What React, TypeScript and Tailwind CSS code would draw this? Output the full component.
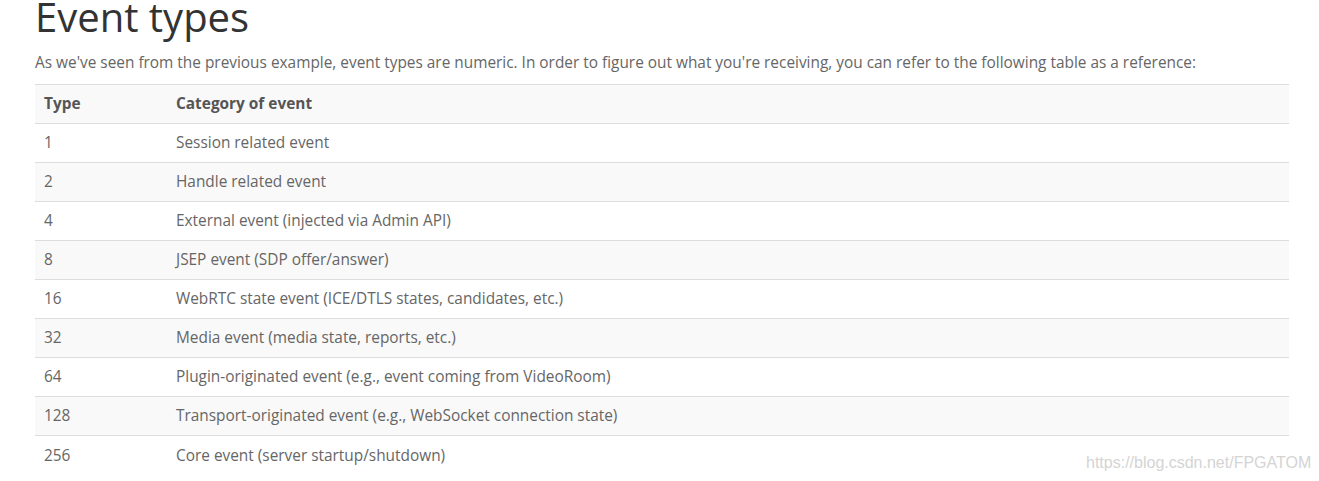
const rows = [
  ['1', 'Session related event'],
  ['2', 'Handle related event'],
  ['4', 'External event (injected via Admin API)'],
  ['8', 'JSEP event (SDP offer/answer)'],
  ['16', 'WebRTC state event (ICE/DTLS states, candidates, etc.)'],
  ['32', 'Media event (media state, reports, etc.)'],
  ['64', 'Plugin-originated event (e.g., event coming from VideoRoom)'],
  ['128', 'Transport-originated event (e.g., WebSocket connection state)'],
  ['256', 'Core event (server startup/shutdown)'],
];

export default function App() {
  return (
    <div
      className="relative w-[1319px] h-[481px] bg-white overflow-hidden"
      style={{ fontFamily: '"Open Sans", sans-serif' }}
    >
      <div className="pl-[35px] w-[1289px] box-content">
        <h1 className="text-[40px] leading-[34px] text-[#333] h-[46px]">Event types</h1>
        <p className="text-[15.4px] leading-[20px] text-[#666] mt-[7px] mb-[11px]">
          As we've seen from the previous example, event types are numeric. In order to figure out what
          you're receiving, you can refer to the following table as a reference:
        </p>
        <table className="w-[1254px] border-collapse text-[15.4px] text-[#666]">
          <thead>
            <tr className="bg-[#f9f9f9] border-t border-[#ddd]">
              <th className="w-[141px] h-[39px] px-[9px] text-left font-bold text-[#555]">Type</th>
              <th className="h-[39px] px-0 text-left font-bold text-[#555]">Category of event</th>
            </tr>
          </thead>
          <tbody>
            {rows.map(([t, c], i) => (
              <tr
                key={t}
                className={`border-t border-[#ddd] ${i % 2 === 1 ? 'bg-[#f9f9f9]' : 'bg-white'}`}
              >
                <td className="h-[39px] px-[9px]">{t}</td>
                <td className="h-[39px] px-0">{c}</td>
              </tr>
            ))}
          </tbody>
        </table>
      </div>
      <div
        className="absolute left-[1086px] top-[451px] text-[16px] text-[#d4d4d4]"
        style={{ fontFamily: '"Liberation Sans", Arial, sans-serif' }}
      >
        https://blog.csdn.net/FPGATOM
      </div>
    </div>
  );
}
